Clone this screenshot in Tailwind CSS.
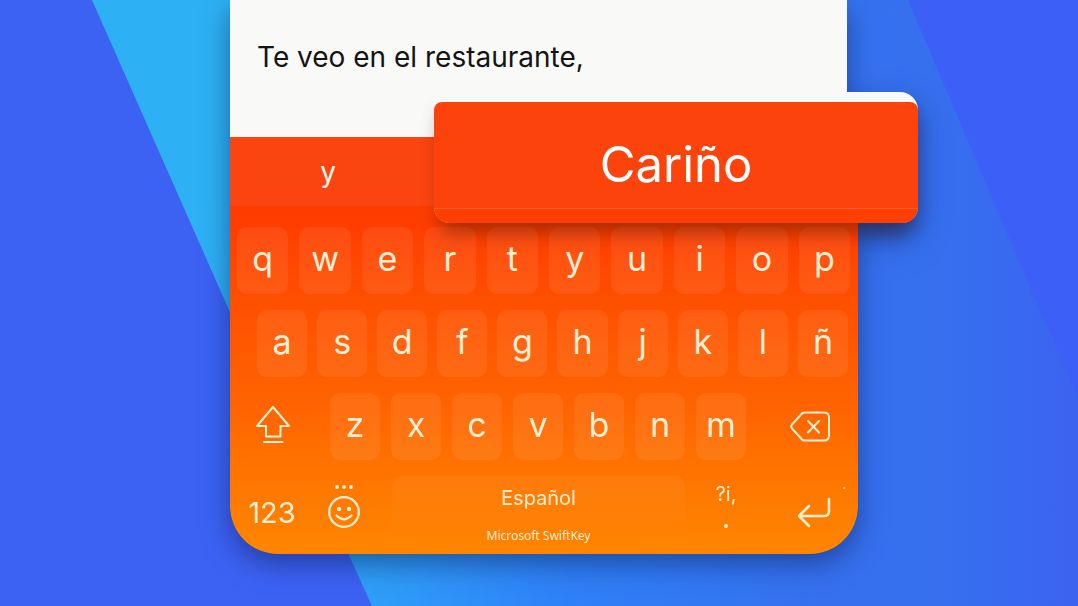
<!DOCTYPE html>
<html lang="es">
<head>
<meta charset="utf-8">
<meta name="viewport" content="width=device-width, initial-scale=1">
<title>Microsoft SwiftKey</title>
<script src="https://cdn.jsdelivr.net/npm/@tailwindcss/browser@4"></script>
</head>
<body class="relative min-h-screen overflow-hidden bg-[#3c62f4] font-['Inter','Noto_Sans',sans-serif]">
  <!-- Diagonal background bands -->
  <svg class="absolute inset-0 h-full w-full" viewBox="0 0 1078 606" preserveAspectRatio="none" aria-hidden="true">
    <defs>
      <linearGradient id="band" gradientUnits="userSpaceOnUse" x1="200" y1="250" x2="860" y2="340">
        <stop offset="0" stop-color="#2db1f4"/>
        <stop offset="0.32" stop-color="#2e9ff8"/>
        <stop offset="0.62" stop-color="#2f80f8"/>
        <stop offset="1" stop-color="#3670ee"/>
      </linearGradient>
      <linearGradient id="edge" x1="0" y1="0" x2="1" y2="0">
        <stop offset="0.86" stop-color="#3c60f7" stop-opacity="0"/>
        <stop offset="1" stop-color="#3c60f0" stop-opacity="0.8"/>
      </linearGradient>
    </defs>
    <path d="M92 0 229 310 348 553 372 606H1078V0Z" fill="url(#band)"/>
    <rect width="1078" height="606" fill="url(#edge)"/>
    <path d="M908 0 1037 303 1078 395V0Z" fill="#3c5ff7"/>
  </svg>

  <main class="relative grid grid-cols-[230fr_628fr_220fr]">
    <section class="col-start-2 flex flex-col drop-shadow-[0_10px_14px_rgba(10,25,80,0.5)]">
      <input type="text" aria-label="Mensaje" value="Te veo en el restaurante," class="mr-[11px] h-[137px] bg-[#f9f9f8] pr-4 pb-6 pl-[27px] text-[28px] text-[#141414] outline-none">

      <div class="rounded-b-[48px] bg-linear-to-b from-[#ff3c00] from-20% via-[#ff6400] via-65% to-[#ff8600] pb-[10px]">
        <!-- Suggestions -->
        <div class="relative grid h-[69px] grid-cols-[196fr_432fr] bg-[#fb4510]">
          <button type="button" class="text-[28px] text-[#fff6ea]">y</button>
          <button type="button" class="absolute -top-[45px] -right-[60px] left-[204px] z-10 h-[131px] rounded-tr-[18px] rounded-b-[16px] bg-[#f9f9f8] pt-[10px] shadow-[0_16px_18px_-6px_rgba(60,20,0,0.42)]">
            <span class="flex h-full flex-col overflow-hidden rounded-t-[8px] rounded-b-[16px] bg-[#fd430c]">
              <span class="flex flex-1 items-center justify-center border-b border-[#ff5a28] pt-5 text-[49px] text-white">Cariño</span>
              <span class="h-[14px] bg-[#ff3f02]"></span>
            </span>
          </button>
        </div>

        <!-- Keys -->
        <div class="flex flex-col gap-4 pt-[21px] text-[34px] leading-none text-[#fff0d4]">
          <div class="grid h-[67px] grid-cols-10 gap-[11px] pr-2 pl-[7px]">
            <button type="button" class="rounded-[10px] bg-white/7 pb-1">q</button>
            <button type="button" class="rounded-[10px] bg-white/7 pb-1">w</button>
            <button type="button" class="rounded-[10px] bg-white/7 pb-1">e</button>
            <button type="button" class="rounded-[10px] bg-white/7 pb-1">r</button>
            <button type="button" class="rounded-[10px] bg-white/7 pb-1">t</button>
            <button type="button" class="rounded-[10px] bg-white/7 pb-1">y</button>
            <button type="button" class="rounded-[10px] bg-white/7 pb-1">u</button>
            <button type="button" class="rounded-[10px] bg-white/7 pb-1">i</button>
            <button type="button" class="rounded-[10px] bg-white/7 pb-1">o</button>
            <button type="button" class="rounded-[10px] bg-white/7 pb-1">p</button>
          </div>
          <div class="grid h-[67px] grid-cols-10 gap-[10px] pr-[10px] pl-[27px]">
            <button type="button" class="rounded-[10px] bg-white/7 pb-1">a</button>
            <button type="button" class="rounded-[10px] bg-white/7 pb-1">s</button>
            <button type="button" class="rounded-[10px] bg-white/7 pb-1">d</button>
            <button type="button" class="rounded-[10px] bg-white/7 pb-1">f</button>
            <button type="button" class="rounded-[10px] bg-white/7 pb-1">g</button>
            <button type="button" class="rounded-[10px] bg-white/7 pb-1">h</button>
            <button type="button" class="rounded-[10px] bg-white/7 pb-1">j</button>
            <button type="button" class="rounded-[10px] bg-white/7 pb-1">k</button>
            <button type="button" class="rounded-[10px] bg-white/7 pb-1">l</button>
            <button type="button" class="rounded-[10px] bg-white/7 pb-1">ñ</button>
          </div>
          <div class="grid h-[67px] grid-cols-[89fr_repeat(7,50fr)_101fr] gap-[11px]">
            <button type="button" aria-label="Mayúsculas" class="flex items-center justify-center pr-1 pb-1">
              <svg width="36" height="40" viewBox="0 0 36 40" fill="none" stroke="currentColor" stroke-width="2" stroke-linejoin="round" stroke-linecap="round" aria-hidden="true"><path d="M18 2 34 21H25.500V31.500H11V21H2ZM9 37H27.500"/></svg>
            </button>
            <button type="button" class="rounded-[10px] bg-white/7 pb-1">z</button>
            <button type="button" class="rounded-[10px] bg-white/7 pb-1">x</button>
            <button type="button" class="rounded-[10px] bg-white/7 pb-1">c</button>
            <button type="button" class="rounded-[10px] bg-white/7 pb-1">v</button>
            <button type="button" class="rounded-[10px] bg-white/7 pb-1">b</button>
            <button type="button" class="rounded-[10px] bg-white/7 pb-1">n</button>
            <button type="button" class="rounded-[10px] bg-white/7 pb-1">m</button>
            <button type="button" aria-label="Borrar" class="flex items-center justify-center pl-1">
              <svg width="40" height="32" viewBox="0 0 40 32" fill="none" stroke="currentColor" stroke-width="2" stroke-linejoin="round" stroke-linecap="round" aria-hidden="true"><path d="M14.500 1.500H34Q39 1.500 39 6.500V24.500Q39 29.500 34 29.500H14.500Q13 29.500 12 28.500L2 17.500Q0.500 15.500 2 13.500L12 2.500Q13 1.500 14.500 1.500ZM18 10 29 21.500M29 10 18 21.500"/></svg>
            </button>
          </div>
          <div class="grid h-[68px] grid-cols-[84fr_60fr_321fr_62fr_101fr]">
            <button type="button" class="pt-1 text-[29px]">123</button>
            <button type="button" aria-label="Emojis" class="flex items-center justify-center pb-2">
              <svg width="34" height="46" viewBox="0 0 34 46" fill="none" stroke="currentColor" stroke-width="2.200" stroke-linecap="round" aria-hidden="true"><circle cx="17" cy="29" r="14.800"/><path d="M9.500 32.500Q17 40 24.500 32.500"/><g fill="currentColor" stroke="none"><circle cx="12" cy="26" r="2.200"/><circle cx="22" cy="26" r="2.200"/><circle cx="10" cy="4" r="1.900"/><circle cx="17" cy="4" r="1.900"/><circle cx="24" cy="4" r="1.900"/></g></svg>
            </button>
            <button type="button" class="mr-[10px] ml-[18px] flex flex-col items-center justify-between rounded-[10px] bg-linear-to-b from-white/5 to-white/0 pt-3">
              <span class="text-[20px] leading-5">Español</span>
              <span class="font-['Noto_Sans',sans-serif] text-[12px] leading-4">Microsoft SwiftKey</span>
            </button>
            <button type="button" class="flex flex-col items-center pt-2 text-[20px] leading-5">
              <span>?i,</span>
              <svg class="mt-5" width="4" height="4" viewBox="0 0 4 4" fill="currentColor" aria-hidden="true"><circle cx="2" cy="2" r="2"/></svg>
            </button>
            <button type="button" aria-label="Intro" class="flex items-center justify-end pr-3 pb-2">
              <svg width="50" height="44" viewBox="0 0 50 44" fill="none" stroke="currentColor" stroke-width="2.500" stroke-linejoin="round" stroke-linecap="round" aria-hidden="true"><path d="M33 15V27Q33 32 28 32H3M13 22 3 32 13 42"/><path d="M48 4h.5" stroke-width="1.500"/></svg>
            </button>
          </div>
        </div>
      </div>
    </section>
  </main>
</body>
</html>
